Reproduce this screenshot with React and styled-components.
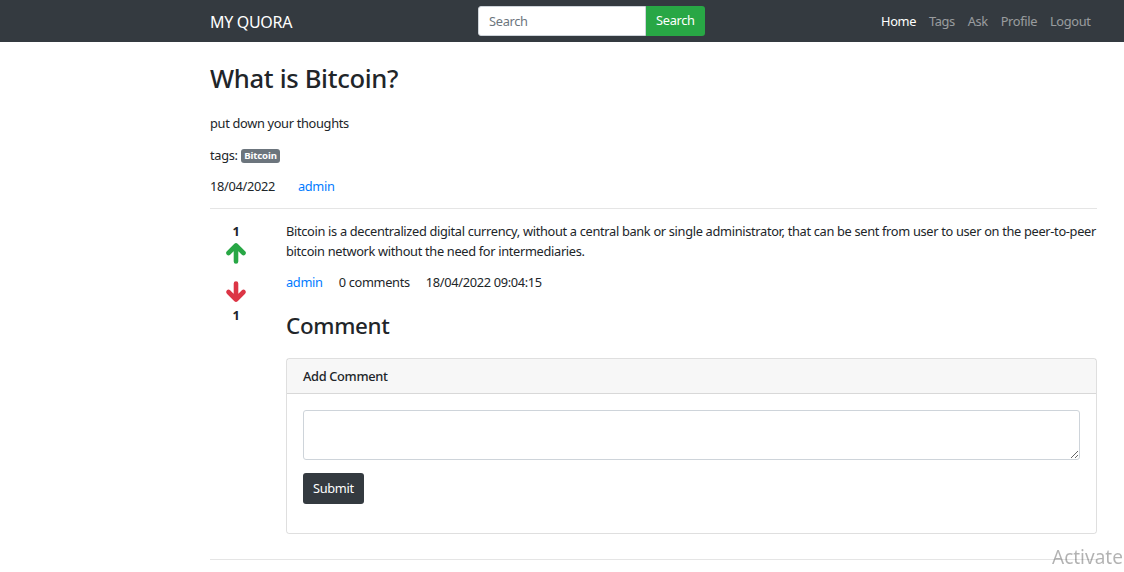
import React from 'react'
import styled, { createGlobalStyle } from 'styled-components'

const GlobalStyle = createGlobalStyle`
  * { box-sizing: border-box; }
  body {
    margin: 0;
    font-family: "Noto Sans", "Open Sans", sans-serif;
    font-size: 12.8px;
    line-height: 1.5;
    letter-spacing: -0.025em;
    color: #212529;
    background: #fff;
  }
`

const Navbar = styled.nav`
  height: 42px;
  background: #343a40;
`
const NavInner = styled.div`
  width: 911px;
  margin-left: 198px;
  padding: 1px 12px 0;
  height: 100%;
  display: flex;
  align-items: center;
`
const Brand = styled.a`
  color: #fff;
  font-size: 16px;
  text-decoration: none;
`
const SearchForm = styled.form`
  display: flex;
  margin: -2px 0 0 186px;
`
const SearchInput = styled.input`
  width: 168px;
  height: 30px;
  border: 1px solid #ced4da;
  border-radius: 3px 0 0 3px;
  padding: 0 10px;
  font: inherit;
  font-size: 12.8px;
  letter-spacing: inherit;
  color: #495057;
  &::placeholder { color: #6c757d; }
`
const SearchButton = styled.button`
  height: 30px;
  padding: 0 10px;
  border: 0;
  border-radius: 0 3px 3px 0;
  background: #28a745;
  color: #fff;
  font: inherit;
  font-size: 12.8px;
  letter-spacing: inherit;
`
const NavLinks = styled.div`
  display: flex;
  margin-left: auto;
`
const NavLink = styled.a`
  padding: 0 6.4px;
  color: ${p => (p.$active ? '#fff' : 'rgba(255,255,255,.5)')};
  text-decoration: none;
`

const Container = styled.main`
  width: 911px;
  margin-left: 198px;
  padding: 0 12px;
`
const Title = styled.h2`
  margin: 0;
  padding-top: 22px;
  font-size: 25.6px;
  font-weight: 500;
  line-height: 1.2;
`
const Para = styled.p`
  margin: ${p => p.$top || 0}px 0 0;
`
const Badge = styled.span`
  display: inline-block;
  padding: 2.4px 3.5px;
  font-size: 9.6px;
  font-weight: 700;
  line-height: 1;
  letter-spacing: -0.01em;
  color: #fff;
  background: #6c757d;
  border-radius: 3px;
  vertical-align: 1px;
`
const Meta = styled.div`
  display: flex;
  gap: ${p => p.$gap || 16}px;
  margin-top: ${p => p.$top || 0}px;
`
const Link = styled.a`
  color: #007bff;
  text-decoration: none;
`
const Rule = styled.hr`
  margin: ${p => p.$top || 0}px 0 0;
  border: 0;
  border-top: 1px solid rgba(0, 0, 0, 0.1);
`
const Answer = styled.div`
  display: flex;
  margin-top: 12px;
`
const Votes = styled.div`
  width: 52px;
  margin-right: 24px;
  display: flex;
  flex-direction: column;
  align-items: center;
  font-weight: 700;
  padding-top: 2px;
`
const VoteCount = styled.div`
  line-height: 16px;
  margin-top: ${p => p.$top || 0}px;
`
const Arrow = styled.svg`
  display: block;
  width: 22px;
  height: 22px;
  margin-top: ${p => p.$top}px;
`
const AnswerBody = styled.div`
  flex: 1;
`
const AnswerText = styled.p`
  margin: 0;
  line-height: 20px;
`
const CommentTitle = styled.h3`
  margin: 21px 0 0;
  font-size: 22.4px;
  font-weight: 500;
  line-height: 1.2;
`
const Card = styled.div`
  margin-top: 18px;
  border: 1px solid rgba(0, 0, 0, 0.125);
  border-radius: 3px;
`
const CardHeader = styled.div`
  height: 35px;
  padding: 0 16px;
  display: flex;
  align-items: center;
  background: rgba(0, 0, 0, 0.03);
  border-bottom: 1px solid rgba(0, 0, 0, 0.125);
  font-weight: 500;
`
const CardBody = styled.div`
  padding: 16px 16px 29px;
`
const TextArea = styled.textarea`
  display: block;
  width: 100%;
  height: 50px;
  border: 1px solid #ced4da;
  border-radius: 3px;
  font: inherit;
`
const SubmitButton = styled.button`
  margin-top: 13px;
  height: 31px;
  padding: 0 10px;
  border: 0;
  border-radius: 3px;
  background: #343a40;
  color: #fff;
  font: inherit;
  letter-spacing: inherit;
`
const Watermark = styled.div`
  position: fixed;
  left: 1052px;
  top: 543px;
  font-size: 19px;
  letter-spacing: 0;
  color: rgba(0, 0, 0, 0.3);
  white-space: nowrap;
`

function VoteArrow({ color, down, top }) {
  return (
    <Arrow viewBox="0 0 22 22" $top={top} style={down ? { transform: 'rotate(180deg)' } : undefined}>
      <path
        d="M3.5 11 L11 3.5 L18.5 11 M11 4 V19.5"
        fill="none"
        stroke={color}
        strokeWidth="4.6"
        strokeLinecap="round"
        strokeLinejoin="round"
      />
    </Arrow>
  )
}

export default function App() {
  return (
    <>
      <GlobalStyle />
      <Navbar>
        <NavInner>
          <Brand href="#">MY QUORA</Brand>
          <SearchForm onSubmit={e => e.preventDefault()}>
            <SearchInput placeholder="Search" />
            <SearchButton>Search</SearchButton>
          </SearchForm>
          <NavLinks>
            <NavLink href="#" $active>Home</NavLink>
            <NavLink href="#">Tags</NavLink>
            <NavLink href="#">Ask</NavLink>
            <NavLink href="#">Profile</NavLink>
            <NavLink href="#">Logout</NavLink>
          </NavLinks>
        </NavInner>
      </Navbar>

      <Container>
        <Title>What is Bitcoin?</Title>
        <Para $top={19}>put down your thoughts</Para>
        <Para $top={13}>
          tags: <Badge>Bitcoin</Badge>
        </Para>
        <Meta $top={12} $gap={23}>
          <span>18/04/2022</span>
          <Link href="#">admin</Link>
        </Meta>
        <Rule $top={12} />

        <Answer>
          <Votes>
            <VoteCount>1</VoteCount>
            <VoteArrow color="#28a745" top={3} />
            <VoteArrow color="#dc3545" top={17} down />
            <VoteCount $top={4}>1</VoteCount>
          </Votes>
          <AnswerBody>
            <AnswerText>
              Bitcoin is a decentralized digital currency, without a central bank or single
              administrator, that can be sent from user to user on the peer-to-peer bitcoin
              network without the need for intermediaries.
            </AnswerText>
            <Meta $top={12}>
              <Link href="#">admin</Link>
              <span>0 comments</span>
              <span>18/04/2022 09:04:15</span>
            </Meta>
            <CommentTitle>Comment</CommentTitle>
            <Card>
              <CardHeader>Add Comment</CardHeader>
              <CardBody>
                <TextArea />
                <SubmitButton>Submit</SubmitButton>
              </CardBody>
            </Card>
          </AnswerBody>
        </Answer>
        <Rule $top={25} />
      </Container>
      <Watermark>Activate</Watermark>
    </>
  )
}
